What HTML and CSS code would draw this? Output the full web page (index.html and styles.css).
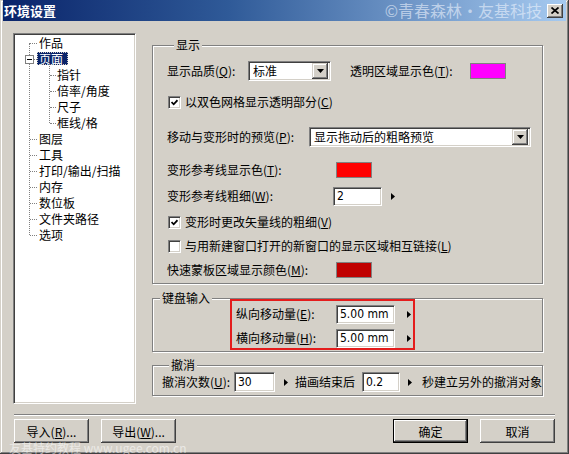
FILE: index.html
```html
<!DOCTYPE html>
<html lang="zh-CN">
<head>
<meta charset="utf-8">
<title>环境设置</title>
<link rel="stylesheet" href="styles.css">
</head>
<body>
<div class="window">
  <div class="titlebar">
    <span class="title">环境设置</span>
    <span class="title-mark">©青春森林·友基科技</span>
    <span class="close-btn"><svg width="8" height="7" viewBox="0 0 8 7"><path d="M0.5 0.5L7.5 6.5M7.5 0.5L0.5 6.5" stroke="#000" stroke-width="1.7" fill="none"/></svg></span>
  </div>

  <div class="main">
    <div class="tree">
      <ul class="tree-l1">
        <li>作品</li>
        <li class="open"><span class="minus"></span><span class="selected">页面</span>
          <ul class="tree-l2">
            <li>指针</li>
            <li>倍率/角度</li>
            <li>尺子</li>
            <li>框线/格</li>
          </ul>
        </li>
        <li>图层</li>
        <li>工具</li>
        <li>打印/输出/扫描</li>
        <li>内存</li>
        <li>数位板</li>
        <li>文件夹路径</li>
        <li>选项</li>
      </ul>
    </div>

    <div class="panel">
      <fieldset class="group group-display">
        <legend>显示</legend>
        <div class="row row-quality">
          <span class="lbl lbl-quality">显示品质(<u>Q</u>):</span>
          <div class="select select-quality field"><span class="select-val">标准</span><span class="dd-btn"><svg width="7" height="4" viewBox="0 0 7 4"><path d="M0 0H7L3.5 4Z" fill="#000"/></svg></span></div>
          <span class="lbl lbl-transp">透明区域显示色(<u>T</u>):</span>
          <span class="swatch swatch-magenta"></span>
        </div>
        <div class="row row-check1">
          <span class="check field"><svg width="7" height="7" viewBox="0 0 7 7"><path d="M0.5 3L2.7 5.3L6.5 1.2" stroke="#000" stroke-width="1.8" fill="none"/></svg></span>
          <span class="lbl">以双色网格显示透明部分(<u>C</u>)</span>
        </div>
        <div class="row row-preview">
          <span class="lbl lbl-preview">移动与变形时的预览(<u>P</u>):</span>
          <div class="select select-preview field"><span class="select-val">显示拖动后的粗略预览</span><span class="dd-btn"><svg width="7" height="4" viewBox="0 0 7 4"><path d="M0 0H7L3.5 4Z" fill="#000"/></svg></span></div>
        </div>
        <div class="row row-guidecolor">
          <span class="lbl lbl-swatch">变形参考线显示色(<u>T</u>):</span>
          <span class="swatch swatch-red"></span>
        </div>
        <div class="row row-guidewidth">
          <span class="lbl lbl-width">变形参考线粗细(<u>W</u>):</span>
          <span class="input field input-width">2</span>
          <svg class="arrow arrow-width" width="4" height="7" viewBox="0 0 4 7"><path d="M0 0L4 3.5L0 7Z" fill="#000"/></svg>
        </div>
        <div class="row row-check2">
          <span class="check field"><svg width="7" height="7" viewBox="0 0 7 7"><path d="M0.5 3L2.7 5.3L6.5 1.2" stroke="#000" stroke-width="1.8" fill="none"/></svg></span>
          <span class="lbl">变形时更改矢量线的粗细(<u>V</u>)</span>
        </div>
        <div class="row row-check3">
          <span class="check field"></span>
          <span class="lbl">与用新建窗口打开的新窗口的显示区域相互链接(<u>L</u>)</span>
        </div>
        <div class="row row-mask">
          <span class="lbl lbl-swatch">快速蒙板区域显示颜色(<u>M</u>):</span>
          <span class="swatch swatch-darkred"></span>
        </div>
      </fieldset>

      <fieldset class="group group-keyboard">
        <legend>键盘输入</legend>
        <div class="highlight">
          <div class="row">
            <span class="lbl lbl-nudge">纵向移动量(<u>E</u>):</span>
            <span class="input field input-nudge">5.00 mm</span>
            <svg class="arrow arrow-nudge" width="4" height="7" viewBox="0 0 4 7"><path d="M0 0L4 3.5L0 7Z" fill="#000"/></svg>
          </div>
          <div class="row row-nudge2">
            <span class="lbl lbl-nudge">横向移动量(<u>H</u>):</span>
            <span class="input field input-nudge">5.00 mm</span>
            <svg class="arrow arrow-nudge" width="4" height="7" viewBox="0 0 4 7"><path d="M0 0L4 3.5L0 7Z" fill="#000"/></svg>
          </div>
        </div>
      </fieldset>

      <fieldset class="group group-undo">
        <legend>撤消</legend>
        <div class="row">
          <span class="lbl lbl-undo">撤消次数(<u>U</u>):</span>
          <span class="input field input-undo">30</span>
          <svg class="arrow arrow-undo" width="4" height="7" viewBox="0 0 4 7"><path d="M0 0L4 3.5L0 7Z" fill="#000"/></svg>
          <span class="lbl lbl-after">描画结束后</span>
          <span class="input field input-sec">0.2</span>
          <svg class="arrow arrow-sec" width="4" height="7" viewBox="0 0 4 7"><path d="M0 0L4 3.5L0 7Z" fill="#000"/></svg>
          <span class="lbl lbl-tail">秒建立另外的撤消对象</span>
        </div>
      </fieldset>
    </div>
  </div>

  <div class="separator"></div>

  <div class="buttons">
    <span class="btn">导入(<u>R</u>)...</span>
    <span class="btn">导出(<u>W</u>)...</span>
    <span class="btn btn-default btn-ok">确定</span>
    <span class="btn">取消</span>
  </div>

  <div class="footer-mark">友基特约教程 www.ugee.com.cn</div>
</div>
</body>
</html>
```

FILE: styles.css
```css
* { box-sizing: border-box; }
html, body { margin: 0; padding: 0; }
body {
  width: 569px;
  height: 454px;
  overflow: hidden;
  background: #d4d0c8;
  font-family: "Noto Sans CJK SC", "Liberation Sans", sans-serif;
  font-size: 12px;
  color: #000;
}
u { text-decoration: underline; text-underline-offset: 1px; }

.window {
  position: relative;
  width: 569px;
  height: 454px;
  padding: 0 3px 3px 3px;
  background: #d4d0c8;
  box-shadow: inset -1px -1px #404040, inset 1px 1px #d4d0c8, inset -2px -2px #808080, inset 2px 2px #fff;
}

/* title bar */
.titlebar {
  height: 21px;
  display: flex;
  align-items: center;
  padding: 0 3px 0 1px;
  background: linear-gradient(to right, #0a246a 0%, #2f5a98 40%, #a6caf0 100%);
}
.title {
  color: #fff;
  font-weight: bold;
  font-size: 13px;
  line-height: 19px;
}
.title-mark {
  margin-left: auto;
  margin-right: 5px;
  color: rgba(236, 242, 252, 0.62);
  font-size: 16px;
  line-height: 21px;
  white-space: nowrap;
}
.close-btn {
  flex: none;
  width: 16px;
  height: 14px;
  display: flex;
  align-items: center;
  justify-content: center;
  background: #d4d0c8;
  box-shadow: inset -1px -1px #404040, inset 1px 1px #fff, inset -2px -2px #808080;
}

/* main area */
.main {
  display: flex;
  align-items: flex-start;
}

.tree {
  margin: 12px 0 0 10px;
  width: 123px;
  height: 371px;
  background: #fff;
  border: 1px solid;
  border-color: #808080 #fff #fff #808080;
  box-shadow: inset 1px 1px #404040, inset -1px -1px #d4d0c8;
  padding: 1px 0 0 1px;
}
.tree ul { list-style: none; margin: 0; padding: 0; }
.tree li { position: relative; line-height: 16px; white-space: nowrap; }
.tree-l1 { position: relative; }
.tree-l1::before {
  content: "";
  position: absolute;
  left: 14px;
  top: 8px;
  bottom: 8px;
  border-left: 1px dotted #808080;
}
.tree-l1 > li { padding-left: 24px; }
.tree-l1 > li::before {
  content: "";
  position: absolute;
  left: 15px;
  top: 8px;
  width: 7px;
  border-top: 1px dotted #808080;
}
.minus {
  position: absolute;
  left: 10px;
  top: 4px;
  width: 9px;
  height: 9px;
  background: #fff;
  border: 1px solid #808080;
}
.minus::after {
  content: "";
  position: absolute;
  left: 1px;
  top: 3px;
  width: 5px;
  height: 1px;
  background: #000;
}
.selected {
  display: inline-block;
  vertical-align: top;
  margin: 1px 0 0 -2px;
  padding: 0 5px 0 2px;
  height: 13px;
  line-height: 13px;
  background: #0a246a;
  color: #fff;
  outline: 1px dotted #d4d0c8;
  outline-offset: -1px;
}
.tree-l2 { position: relative; margin-left: -24px !important; }
.tree-l2::before {
  content: "";
  position: absolute;
  left: 34px;
  top: -3px;
  bottom: 8px;
  border-left: 1px dotted #808080;
}
.tree-l2 > li { padding-left: 42px; }
.tree-l2 > li::before {
  content: "";
  position: absolute;
  left: 35px;
  top: 8px;
  width: 6px;
  border-top: 1px dotted #808080;
}

/* right panel */
.panel {
  margin: 17px 0 0 16px;
  width: 391px;
}
.group {
  margin: 0;
  padding: 0;
  min-width: 0;
  border: 1px solid #808080;
  box-shadow: inset 1px 1px #fff, 1px 1px #fff;
}
.group legend {
  margin-left: 7px;
  padding: 0 2px;
  line-height: 14px;
  background: #d4d0c8;
}

.row {
  display: flex;
  align-items: center;
  height: 20px;
  white-space: nowrap;
}
.lbl { line-height: 20px; }

.group-display { padding: 0 0 3px 14px; }
.row-quality { margin-top: 9px; }
.row-check1 { margin-top: 11px; }
.row-preview { margin-top: 15px; }
.row-guidecolor { margin-top: 13px; }
.row-guidewidth { margin-top: 6px; }
.row-check2 { margin-top: 6px; }
.row-check3 { margin-top: 4px; }
.row-mask { margin-top: 4px; }

.lbl-quality { width: 81px; }
.lbl-transp { width: 120px; margin-left: 19px; }
.lbl-preview { width: 142px; }
.lbl-swatch { width: 169px; }
.lbl-width { width: 166px; }

.field {
  background: #fff;
  border: 1px solid;
  border-color: #808080 #fff #fff #808080;
  box-shadow: inset 1px 1px #404040, inset -1px -1px #d4d0c8;
}

.select {
  display: flex;
  align-items: center;
  height: 20px;
  padding: 2px 2px 2px 4px;
}
.select-quality { width: 83px; }
.select-preview { width: 222px; }
.select-val { flex: 1; line-height: 16px; }
.dd-btn {
  width: 16px;
  height: 16px;
  display: flex;
  align-items: center;
  justify-content: center;
  background: #d4d0c8;
  box-shadow: inset -1px -1px #404040, inset 1px 1px #d4d0c8, inset -2px -2px #808080, inset 2px 2px #fff;
}

.swatch {
  width: 36px;
  height: 16px;
  border: 1px solid #808080;
}
.swatch-magenta { background: #ff00ff; }
.swatch-red { background: #ff0000; }
.swatch-darkred { background: #c00000; }

.check {
  width: 13px;
  height: 13px;
  margin: 0 4px 0 1px;
  display: flex;
  align-items: center;
  justify-content: center;
}

.input {
  display: flex;
  align-items: center;
  height: 19px;
  padding: 0 0 0 3px;
  font-family: "Liberation Sans Narrow", "DejaVu Sans Condensed", "Liberation Sans", sans-serif;
  font-size: 12px;
}
.input-width { width: 49px; }
.arrow-width { margin-left: 9px; }

.group-keyboard { margin-top: 7px; padding: 0 0 1px 0; }
.highlight {
  margin: -6px 0 0 77px;
  width: 185px;
  height: 51px;
  border: 2px solid #e41c1c;
  padding: 3px 0 0 4px;
}
.row-nudge2 { margin-top: 4px; }
.lbl-nudge { width: 100px; }
.input-nudge { width: 59px; }
.arrow-nudge { margin-left: 12px; }

.group-undo { margin-top: 6px; padding: 0 0 3px 9px; }
.lbl-undo { width: 72px; }
.input-undo { width: 41px; height: 20px; }
.arrow-undo { margin-left: 9px; }
.lbl-after { width: 67px; margin-left: 7px; }
.input-sec { width: 38px; height: 20px; }
.arrow-sec { margin-left: 8px; }
.lbl-tail { margin-left: 10px; }

/* bottom */
.separator {
  margin: 10px 0 0 11px;
  width: 541px;
  height: 2px;
  border-top: 1px solid #808080;
  border-bottom: 1px solid #fff;
}
.buttons {
  display: flex;
  gap: 12px;
  margin-top: 3px;
  padding: 0 11px;
}
.btn {
  width: 75px;
  height: 24px;
  display: flex;
  align-items: center;
  justify-content: center;
  background: #d4d0c8;
  box-shadow: inset -1px -1px #404040, inset 1px 1px #fff, inset -2px -2px #808080, inset 2px 2px #d4d0c8;
}
.btn-ok { margin-left: auto; }
.btn-default {
  border: 1px solid #000;
}

.footer-mark {
  position: absolute;
  left: 9px;
  top: 441px;
  line-height: 13px;
  font-size: 12px;
  color: rgba(255, 255, 255, 0.55);
  white-space: nowrap;
}
```
